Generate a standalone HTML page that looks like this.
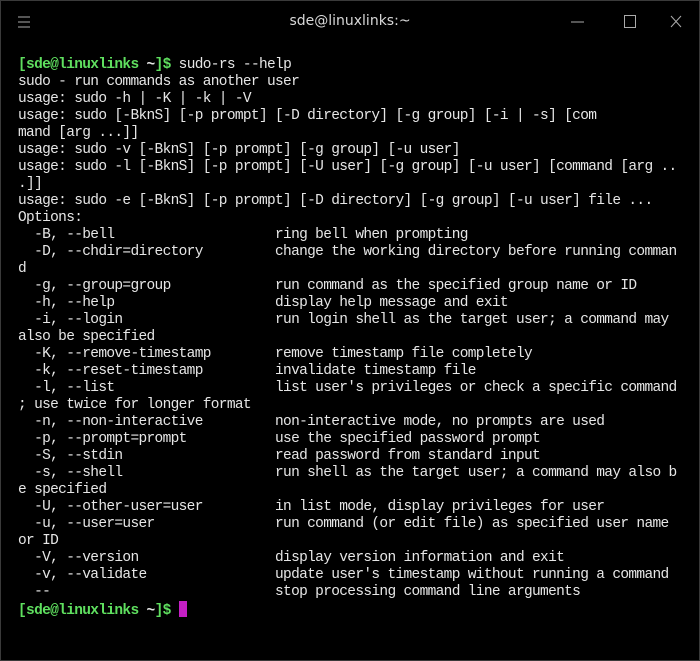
<!DOCTYPE html>
<html><head><meta charset="utf-8"><style>
html,body{margin:0;padding:0;background:#000;}
.win{position:relative;width:698px;height:659px;border:1px solid #3a3a3a;background:#000;overflow:hidden;}
.title{position:absolute;top:12px;left:0;width:100%;text-align:center;color:#d8d8d8;font:14px "DejaVu Sans","Liberation Sans",sans-serif;}
pre{position:absolute;left:17px;top:56px;margin:0;font:14.5px/17px "Liberation Mono",monospace;letter-spacing:-0.67px;color:#e6e6e6;}
.g{color:#5fdf5f;font-weight:bold}
.w{color:#e6e6e6;font-weight:bold}
.cur{display:inline-block;width:8px;height:16px;background:#c41fc4;vertical-align:-3px;}
</style></head><body><div class="win">
<svg style="position:absolute;left:16px;top:14px" width="14" height="14"><path d="M1 2H13M1 7H13M1 12H13" stroke="#aaa" stroke-width="1"/></svg>
<div class="title">sde@linuxlinks:~</div>
<svg style="position:absolute;left:570px;top:12px" width="120" height="18"><path d="M0 9H13" stroke="#aaa"/><rect x="53.5" y="2.5" width="11" height="12" fill="none" stroke="#aaa"/><path d="M100 3L110 14M110 3L100 14" stroke="#aaa"/></svg>
<pre><span class="g">[sde@linuxlinks </span><span class="w">~</span><span class="g">]$</span> sudo-rs --help
sudo - run commands as another user
usage: sudo -h | -K | -k | -V
usage: sudo [-BknS] [-p prompt] [-D directory] [-g group] [-i | -s] [com
mand [arg ...]]
usage: sudo -v [-BknS] [-p prompt] [-g group] [-u user]
usage: sudo -l [-BknS] [-p prompt] [-U user] [-g group] [-u user] [command [arg ..
.]]
usage: sudo -e [-BknS] [-p prompt] [-D directory] [-g group] [-u user] file ...
Options:
  -B, --bell                    ring bell when prompting
  -D, --chdir=directory         change the working directory before running comman
d
  -g, --group=group             run command as the specified group name or ID
  -h, --help                    display help message and exit
  -i, --login                   run login shell as the target user; a command may
also be specified
  -K, --remove-timestamp        remove timestamp file completely
  -k, --reset-timestamp         invalidate timestamp file
  -l, --list                    list user's privileges or check a specific command
; use twice for longer format
  -n, --non-interactive         non-interactive mode, no prompts are used
  -p, --prompt=prompt           use the specified password prompt
  -S, --stdin                   read password from standard input
  -s, --shell                   run shell as the target user; a command may also b
e specified
  -U, --other-user=user         in list mode, display privileges for user
  -u, --user=user               run command (or edit file) as specified user name
or ID
  -V, --version                 display version information and exit
  -v, --validate                update user's timestamp without running a command
  --                            stop processing command line arguments
<span class="g">[sde@linuxlinks </span><span class="w">~</span><span class="g">]$</span> <span class="cur"></span></pre>
</div></body></html>
